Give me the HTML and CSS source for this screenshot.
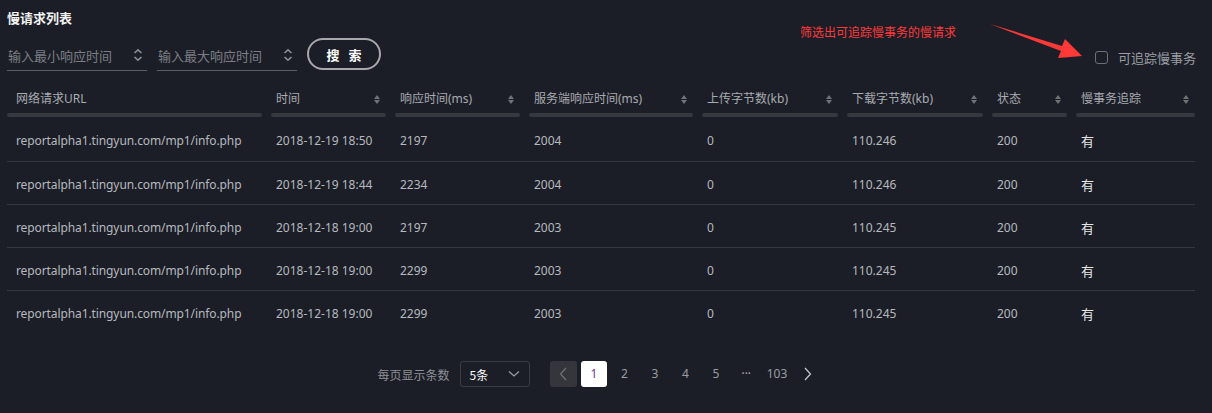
FILE: index.html
```
<!DOCTYPE html>
<html lang="zh-CN">
<head>
  <meta charset="UTF-8">
  <title>慢请求列表</title>
  <link rel="stylesheet" href="styles.css">
</head>
<body>
  <div class="panel">
    <h2 class="title">慢请求列表</h2>
    <div class="toolbar">
      <div class="num-input">
        <span class="placeholder">输入最小响应时间</span>
        <svg class="spin" width="10" height="14" viewBox="0 0 10 14"><path d="M1.5 5 L5 1.8 L8.5 5 M1.5 9 L5 12.2 L8.5 9" fill="none" stroke="#8a8d93" stroke-width="1.6"/></svg>
      </div>
      <div class="num-input">
        <span class="placeholder">输入最大响应时间</span>
        <svg class="spin" width="10" height="14" viewBox="0 0 10 14"><path d="M1.5 5 L5 1.8 L8.5 5 M1.5 9 L5 12.2 L8.5 9" fill="none" stroke="#8a8d93" stroke-width="1.6"/></svg>
      </div>
      <button class="search-btn">搜 索</button>
      <label class="check">
        <span class="box"></span>
        <span>可追踪慢事务</span>
      </label>
    </div>

    <!-- 标注 -->
    <div class="note">筛选出可追踪慢事务的慢请求</div>
    <svg class="note-arrow" width="100" height="40" viewBox="0 0 100 40">
      <polygon points="0,1 72,23 75,16 92,33 68,35 71,28" fill="#ff3838"/>
    </svg>

    <div class="table">
      <div class="row head">
        <div class="cell first">网络请求URL</div>
        <div class="cell sort">时间<i></i></div>
        <div class="cell sort">响应时间(ms)<i></i></div>
        <div class="cell sort">服务端响应时间(ms)<i></i></div>
        <div class="cell sort">上传字节数(kb)<i></i></div>
        <div class="cell sort">下载字节数(kb)<i></i></div>
        <div class="cell sort">状态<i></i></div>
        <div class="cell sort">慢事务追踪<i></i></div>
      </div>
      <div id="rows"></div>
    </div>

    <div class="pager">
      <span class="size-label">每页显示条数</span>
      <div class="size-select">
        <span>5条</span>
        <svg width="12" height="8" viewBox="0 0 12 8"><path d="M1 1.5 L6 6 L11 1.5" fill="none" stroke="#9a9da3" stroke-width="1.3"/></svg>
      </div>
      <ul class="pages">
        <li class="prev"><svg width="8" height="14" viewBox="0 0 8 14"><path d="M7 1 L1.5 7 L7 13" fill="none" stroke="#6e7178" stroke-width="1.2"/></svg></li>
        <li class="active">1</li>
        <li>2</li>
        <li>3</li>
        <li>4</li>
        <li>5</li>
        <li class="dots">•••</li>
        <li>103</li>
        <li class="next"><svg width="8" height="14" viewBox="0 0 8 14"><path d="M1 1 L6.5 7 L1 13" fill="none" stroke="#c8cacf" stroke-width="1.2"/></svg></li>
      </ul>
    </div>
  </div>

  <script>
    const data = [
      ["reportalpha1.tingyun.com/mp1/info.php", "2018-12-19 18:50", "2197", "2004", "0", "110.246", "200", "有"],
      ["reportalpha1.tingyun.com/mp1/info.php", "2018-12-19 18:44", "2234", "2004", "0", "110.246", "200", "有"],
      ["reportalpha1.tingyun.com/mp1/info.php", "2018-12-18 19:00", "2197", "2003", "0", "110.245", "200", "有"],
      ["reportalpha1.tingyun.com/mp1/info.php", "2018-12-18 19:00", "2299", "2003", "0", "110.245", "200", "有"],
      ["reportalpha1.tingyun.com/mp1/info.php", "2018-12-18 19:00", "2299", "2003", "0", "110.245", "200", "有"]
    ];
    const rows = document.getElementById("rows");
    data.forEach(r => {
      const div = document.createElement("div");
      div.className = "row body";
      div.innerHTML = r.map((v, i) =>
        `<div class="cell${i === 0 ? " first" : ""}${i === 7 ? " strong" : ""}">${v}</div>`
      ).join("");
      rows.appendChild(div);
    });
  </script>
</body>
</html>
```

FILE: styles.css
```
body { margin: 0; background: #1b1e26; font-family: "Noto Sans", "Noto Sans CJK SC", sans-serif; color: #b4b7bd; }
.panel { position: relative; padding: 9px 17px 0 7px; height: 404px; box-sizing: border-box; }
.title { margin: 0; font-size: 13px; font-weight: bold; color: #f2f2f2; line-height: 18px; font-family: "Noto Sans CJK SC", sans-serif; }
.toolbar { display: flex; align-items: center; height: 32px; margin-top: 11px; }
.num-input { width: 140px; height: 30px; margin-right: 10px; border-bottom: 1px solid #5b5e65; display: flex; align-items: center; justify-content: space-between; box-sizing: border-box; padding: 0 4px 0 1px; margin-top: 3px; }
.placeholder { font-size: 13px; color: #7b7e85; font-family: "Noto Sans CJK SC", sans-serif; }
.spin { display: block; }
.search-btn { width: 74px; height: 32px; border: 2px solid #a7a8ab; border-radius: 16px; background: transparent; color: #ffffff; font-weight: bold; font-size: 13px; font-family: "Noto Sans CJK SC", sans-serif; letter-spacing: 3px; padding: 0 0 0 3px; }
.check { margin-left: auto; display: flex; align-items: center; gap: 10px; font-size: 13px; color: #9a9da3; margin-top: 6px; margin-right: -1px; font-family: "Noto Sans CJK SC", sans-serif; }
.check .box { width: 11px; height: 11px; border: 1.5px solid #6d7077; border-radius: 3px; margin-left: 1px; }
.note { position: absolute; left: 800px; top: 23px; font-size: 12px; color: #ff3a3a; font-family: "Noto Sans CJK SC", sans-serif; }
.note-arrow { position: absolute; left: 990px; top: 23px; }
.table { margin-top: 18px; }
.row { display: grid; grid-template-columns: 255px 115px 125px 164px 136px 136px 75px 119px; column-gap: 9px; }
.cell { padding-left: 5px; font-size: 12px; white-space: nowrap; position: relative; }
.cell.first { padding-left: 9px; }
.head { height: 30px; }
.head .cell { height: 29px; line-height: 22px; color: #a8abb1; }
.head .cell::after { content: ""; position: absolute; left: 0; right: 0; bottom: 0; height: 4px; background: #35383f; border-radius: 2px; }
.sort i { position: absolute; right: 6px; top: 7px; width: 0; height: 0; border-left: 3.5px solid transparent; border-right: 3.5px solid transparent; border-bottom: 4px solid #6f7279; }
.sort i::after { content: ""; position: absolute; left: -3.5px; top: 5px; border-left: 3.5px solid transparent; border-right: 3.5px solid transparent; border-top: 4px solid #6f7279; }
.body { height: 43px; align-items: center; border-bottom: 1px solid #34373e; box-sizing: border-box; padding-top: 2px; }
.body:first-child { height: 44px; }
#rows .body:last-child { border-bottom: none; }
.body .cell { color: #b6b9bf; }
.body .first { letter-spacing: -0.1px; }
.body .cell.strong { color: #e8e8e8; font-family: "Noto Sans CJK SC", sans-serif; font-size: 13px; }
.pager { display: flex; align-items: center; justify-content: center; margin-top: 27px; margin-left: -4px; }
.size-label { font-size: 12px; color: #8e9197; margin-right: 10px; font-family: "Noto Sans CJK SC", sans-serif; }
.size-select { width: 70px; height: 26px; border: 1px solid #3a3d45; border-radius: 3px; box-sizing: border-box; display: flex; align-items: center; justify-content: space-between; padding: 0 9px 0 9px; color: #ffffff; font-size: 12px; font-family: "Noto Sans CJK SC", sans-serif; margin-right: 20px; }
.pages { list-style: none; margin: 0; padding: 0; display: flex; gap: 4.5px; }
.pages li { min-width: 26px; height: 26px; line-height: 26px; text-align: center; font-size: 12px; color: #9a9da3; border-radius: 3px; }
.pages .prev { background: #34363c; display: flex; align-items: center; justify-content: center; width: 27px; }
.pages .active { background: #ffffff; color: #6b3b9a; }
.pages .dots { color: #9a9da3; font-size: 7px; letter-spacing: 0.5px; }
.pages .next { display: flex; align-items: center; justify-content: center; }
```
